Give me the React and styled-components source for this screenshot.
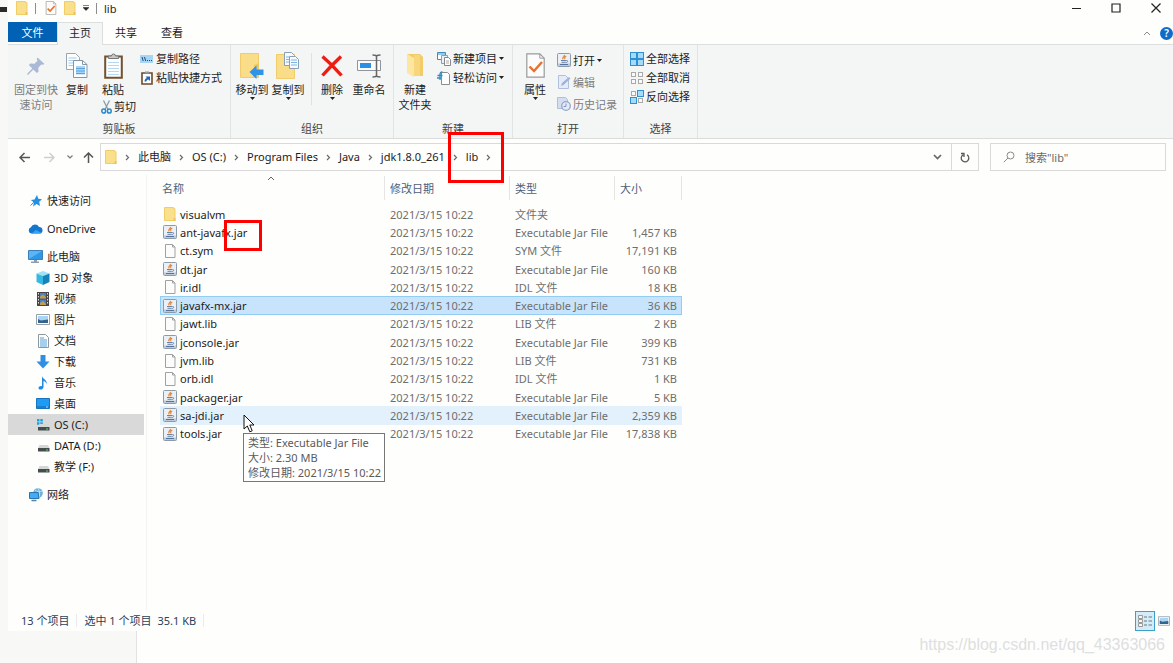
import React from "react";
import styled, { createGlobalStyle, css } from "styled-components";

const Global = createGlobalStyle`
  * { box-sizing: border-box; }
  body {
    margin: 0;
    background: #fefefd;
    color: #1c1c1c;
    font: 11px/15px "Noto Sans", "Noto Sans CJK SC", sans-serif;
    overflow: hidden;
  }
  button, input {
    font: inherit;
    color: inherit;
    background: none;
    border: 0;
    padding: 0;
    margin: 0;
    border-radius: 0;
  }
  a { color: inherit; text-decoration: none; }
  svg { display: block; flex: none; }
`;

/* ---------- icons ---------- */

const Svg = ({ w, h = w, box, children }) => (
  <svg width={w} height={h} viewBox={box || `0 0 ${w} ${h}`} fill="none" aria-hidden="true">
    {children}
  </svg>
);

const Folder = ({ w = 12, h = 14 }) => (
  <Svg w={w} h={h} box="0 0 12 14">
    <path d="M.5.5h9v1.200h1.500v11.800H.5z" fill="#fbe08c" stroke="#f1cd69" />
    <path d="M9.500 11h2v3h-2z" fill="#eec45c" />
  </Svg>
);

const CheckDoc = ({ w = 12, h = 14, fold }) => (
  <Svg w={w} h={h} box="0 0 19 25">
    <path d="M.8.8h13l4.400 4.400v19H.8z" fill="#fcfcfc" stroke="#9a9a9a" strokeWidth="1.200" />
    <path d="M13.800.8v4.400h4.400" stroke="#9a9a9a" />
    <path d="M3.500 13.500l4.500 4.500 8-9" stroke="#e8722c" strokeWidth={fold ? 2.4 : 3} />
  </Svg>
);

const Caret = () => (
  <Svg w={5} h={3}>
    <path d="M0 0h5L2.500 3z" fill="#222" />
  </Svg>
);

const Chevron = () => (
  <Svg w={5} h={7}>
    <path d="M1 1l2.500 2.500L1 6" stroke="#6a6a6a" strokeWidth="1.200" />
  </Svg>
);

const Down = () => (
  <Svg w={9} h={6}>
    <path d="M1 1l3.500 3.500L8 1" stroke="#666" strokeWidth="1.700" />
  </Svg>
);

const Up = ({ color = "#8a8a8a" }) => (
  <Svg w={8} h={5}>
    <path d="M1 4l3-3 3 3" stroke={color} />
  </Svg>
);

const Pin = () => (
  <Svg w={20} h={20}>
    <path d="M11.500 1.500l7 6.500-2 .8-1.200-.3-3 3.300.2 4-1.700 1.200-3.500-3.400L2 19l-1-1 5.300-5.600L2.800 9 4.500 7.600l4 .1 3-3-.8-1.500z" fill="#a9b9d6" />
  </Svg>
);

const Copy = () => (
  <Svg w={22} h={25}>
    <path d="M.5.5h9l4 4v12H.5z" fill="#fbfdff" stroke="#9aa5b0" />
    <path d="M2.500 5h8M2.500 7.500h8M2.500 10h8M2.500 12.500h8" stroke="#a8cbe8" />
    <path d="M7.500 7.500h9l4.500 4v13H7.500z" fill="#fbfdff" stroke="#8795a3" />
    <path d="M10 13h9v8.500h-9z" fill="#a7d4f5" />
    <path d="M10 15.500h9M10 18h9M10 20.500h9" stroke="#5ba3dc" />
    <path d="M16.500 7.500v4H21" stroke="#8795a3" />
  </Svg>
);

const Clipboard = () => (
  <Svg w={19} h={26}>
    <path d="M1.200 3.500h16.600v21.300H1.200z" fill="#fdfeff" stroke="#73512f" strokeWidth="2" />
    <path d="M4.500 5.500V3h3a2 2 0 014 0h3v2.500z" fill="#c4c8cb" stroke="#777" />
    <path d="M4 9.500h11M4 12.500h11M4 15.500h11M4 18.500h11M4 21.500h11" stroke="#b8d7f0" />
  </Svg>
);

const Scissors = () => (
  <Svg w={11} h={14}>
    <path d="M2.500.5l4.500 9M8.500.5l-4.500 9" stroke="#8a99a6" strokeWidth="1.300" />
    <ellipse cx="2.700" cy="11" rx="1.900" ry="2.100" stroke="#2589cc" strokeWidth="1.500" />
    <ellipse cx="8.300" cy="11" rx="1.900" ry="2.100" stroke="#2589cc" strokeWidth="1.500" />
  </Svg>
);

const PathIcon = () => (
  <Svg w={14} h={8}>
    <path d="M0 0h13v8H0z" fill="#a6d5f5" />
    <path d="M2 2l1.200 4M4.500 2l1.200 4M7 5.500h1M9 5.500h1M11 5.500h1" stroke="#274b72" />
  </Svg>
);

const PasteShortcut = () => (
  <Svg w={14} h={14} box="-1 0 14 14">
    <path d="M1 2h10v11H1z" fill="#fff" stroke="#6b4b2c" strokeWidth="1.600" />
    <path d="M4 .5h4v2H4z" fill="#999" />
    <path d="M3.500 10.500c0-2 1-3 2.500-3.500L4.500 5.500H9V10L7.500 8.500c-1.500.2-2 1-2 2z" fill="#1f66b8" />
  </Svg>
);

const MoveTo = () => (
  <Svg w={24} h={26}>
    <path d="M.5.5h18v24H.5z" fill="#f9dd88" stroke="#f0cc6c" />
    <path d="M14 12l-1 12h6V10z" fill="#eec764" />
    <path d="M9.500 19l7-6.500v4h7v5.500h-7v4z" fill="#2f93e8" />
  </Svg>
);

const CopyTo = () => (
  <Svg w={24} h={27}>
    <path d="M.5 2.500h18v24H.5z" fill="#f9dd88" stroke="#f0cc6c" />
    <path d="M8.500.5h7l3 3v10h-10z" fill="#f7fbff" stroke="#8aa0b3" />
    <path d="M13.500 4.500h6l3 3v9h-9z" fill="#f7fbff" stroke="#8aa0b3" />
    <path d="M15 8h6M15 10.500h6M15 13h6M10 5h3M10 7.500h3M10 10h3" stroke="#78b4e6" />
  </Svg>
);

const Cross = () => (
  <Svg w={22} h={22}>
    <path d="M1.500 1.500C8 7 14 13 20.500 20.500M20 1.500C13 8 8 13 1.500 20.500" stroke="#ee1c12" strokeWidth="3.400" />
  </Svg>
);

const Rename = () => (
  <Svg w={25} h={24}>
    <path d="M.5 6.500h23v10H.5z" fill="#fbfbfb" stroke="#8f959b" />
    <path d="M3 9h11v5H3z" fill="#2d8fe3" />
    <path d="M15.500 1c2.500 0 4 .5 4 1.500 0-1 1.500-1.500 4-1.500M19.500 2v19.500M15.500 23c2.500 0 4-.5 4-1.500 0 1 1.500 1.500 4 1.500" stroke="#666" strokeWidth="1.500" />
  </Svg>
);

const NewFolder = () => (
  <Svg w={18} h={25}>
    <path d="M1 1h13l3 3v19H6z" fill="#f3cb68" />
    <path d="M1 1l7 4v19l-7-4z" fill="#fde6a0" />
    <path d="M8 5V2h6v21H8z" fill="#f8d77c" />
  </Svg>
);

const NewItem = () => (
  <Svg w={14} h={14}>
    <path d="M.5.5h8v7h-8z" fill="#fff" stroke="#3c8dbf" />
    <path d="M1 2h7" stroke="#3c8dbf" />
    <path d="M4.500 3.500h6v8h-6z" fill="#e6f3fb" stroke="#7ba5bf" />
    <path d="M7.500 5.500h4l2 2v6h-6z" fill="#fff" stroke="#888" />
    <path d="M9 9h3M9 11h3" stroke="#aaa" />
  </Svg>
);

const EasyAccess = () => (
  <Svg w={14} h={14}>
    <path d="M4.500 1.500h6l2 2v10h-8z" fill="#fff" stroke="#8c8c8c" />
    <path d="M5.500.8C3 .8 3 2 3 3.500V9M.5 4.500h5M0 7h4" stroke="#2e8bc0" strokeWidth="1.300" />
  </Svg>
);

const Jar = () => (
  <Svg w={14} h={14}>
    <rect x=".5" y=".5" width="13" height="13" rx="1" fill="#eaf0f6" stroke="#8d9aaa" />
    <path d="M1 10.500h12V13H1z" fill="#bccada" />
    <path d="M7.300 2c1 1.500-2.800 2.200-1.200 4.300M9.200 3.200c-2 1-1.800 1.500-1.300 3" stroke="#e58a3c" strokeWidth="1.300" />
    <path d="M4 7.500h5.300M4.500 9.300h4.300M9.500 7.500c1.800-.2 1.600 1.800-.4 2" stroke="#6682a5" />
    <path d="M3 11.500h8" stroke="#55739a" />
  </Svg>
);

const Edit = () => (
  <Svg w={14} h={14}>
    <path d="M1.500.5h7l3 3v10h-10z" fill="#e5ecf8" stroke="#b0bfdc" />
    <path d="M4 11l1-3 7-6 1.500 1.500-7 6.500z" fill="#9fb2d8" />
  </Svg>
);

const History = () => (
  <Svg w={14} h={14}>
    <path d="M.5.500h8l2 2v9H.5z" fill="#d4def0" stroke="#b0bfdc" />
    <circle cx="9" cy="9" r="4.300" fill="#e5ebf6" stroke="#93a6cb" strokeWidth="1.300" />
    <path d="M9 6.500V9.500H6.500" stroke="#8296bf" />
  </Svg>
);

const Select = ({ on }) => (
  <Svg w={14} h={14}>
    {[[0, 0], [7, 0], [0, 7], [7, 7]].map(([x, y], i) => (
      <rect
        key={i}
        x={x + (on[i] ? 0.5 : 1.5)}
        y={y + (on[i] ? 0.5 : 1.5)}
        width={on[i] ? 6 : 4}
        height={on[i] ? 6 : 4}
        fill={on[i] ? "#a4dbfb" : "#fafafa"}
        stroke={on[i] ? "#2f8fd0" : "#a9a9a9"}
      />
    ))}
  </Svg>
);

const Star = () => (
  <Svg w={12} h={12}>
    <path d="M7 0l1.300 3.800L12 4.200 9.200 6.800l.8 4.200-3.500-2L3 11.500l1-4L.8 5l3.700-.6z" fill="#2490e3" />
    <path d="M4.200 7L.5 10.500" stroke="#2490e3" />
  </Svg>
);

const Cloud = () => (
  <Svg w={15} h={10}>
    <path d="M3.500 9.500a3.200 3.200 0 01-.6-6.200A4.500 4.500 0 0111 3a3.300 3.300 0 011 6.500z" fill="#1477cf" />
    <path d="M3.500 9.500L8 6l5.500 3c-.5.500-1 .5-1.500.5z" fill="#35a5ee" />
  </Svg>
);

const Pc = () => (
  <Svg w={15} h={13}>
    <path d="M.5.5h14v9H.5z" fill="#5ab5f4" stroke="#3a7fb8" />
    <path d="M1 9L14 1v8z" fill="#2f97e4" />
    <path d="M6 10h3v1.500h2V13H3v-1.500h3z" fill="#8ba0b0" />
  </Svg>
);

const Cube = () => (
  <Svg w={14} h={14}>
    <path d="M7 0l6.500 2.500L7 5 .5 2.500z" fill="#9fe3f6" />
    <path d="M.5 2.500L7 5v9L.5 11z" fill="#36b8e0" />
    <path d="M13.500 2.500L7 5v9l6.500-3z" fill="#1583b8" />
  </Svg>
);

const Film = () => (
  <Svg w={12} h={14}>
    <path d="M0 0h12v14H0z" fill="#474747" />
    <path d="M3 1h6v5.500H3zM3 7.500h6V13H3z" fill="#4b7fc8" />
    <path d="M3 4.500l3-2 3 3v1H3zM3 11l3-2 3 3v1H3z" fill="#c69b4a" />
    <path d="M1.500 1v12M10.500 1v12" stroke="#ddd" strokeDasharray="1.500 1.500" />
  </Svg>
);

const Picture = ({ w = 14, h = 11 }) => (
  <Svg w={w} h={h} box="0 0 14 11">
    <path d="M.5.5h13v10H.5z" fill="#fff" stroke="#9a9fa5" />
    <path d="M2 2h10v7H2z" fill="#a8d4f5" />
    <path d="M2 5l3 1.500L12 5.500V9H2z" fill="#34648c" />
  </Svg>
);

const TextDoc = () => (
  <Svg w={11} h={14}>
    <path d="M.5.5h7l3 3v10H.5z" fill="#fff" stroke="#8f979e" />
    <path d="M2 4h4M2 6h7M2 8h7M2 10h7M2 12h7" stroke="#4f9fdb" />
  </Svg>
);

const Download = () => (
  <Svg w={14} h={14}>
    <path d="M4.500 0h5v6.500h4L7 13.500.5 6.500h4z" fill="#2f8fe5" />
  </Svg>
);

const Music = () => (
  <Svg w={12} h={14}>
    <path d="M5 0c.5 3 5.500 3.500 4.500 8-.5-2-2-3-3-3v6c0 3-5 3.500-5 1 0-1.500 2-2.300 3.500-1.800z" fill="#1e8ce4" />
  </Svg>
);

const DesktopIcon = () => (
  <Svg w={14} h={11}>
    <path d="M.5.5h13v10H.5z" fill="#1d9bf5" stroke="#1673be" />
    <path d="M1 9h12" stroke="#1565a8" />
    <path d="M10 9h2" stroke="#a9dbff" />
  </Svg>
);

const Drive = ({ win }) => (
  <Svg w={13} h={12}>
    {win && <path d="M0 0h2.500v2.500H0zM3.300 0h2.500v2.500H3.300zM0 3.300h2.500v2.500H0zM3.300 3.300h2.500v2.500H3.300z" fill="#18a3e6" />}
    <path d="M2.500 5h8.500l1.500 3H1z" fill="#d4d6d8" />
    <path d="M1 8h11.500v3.500H1z" fill="#484b4e" />
    <path d="M9 10h2" stroke="#4be05b" />
  </Svg>
);

const Network = () => (
  <Svg w={14} h={14}>
    <circle cx="9" cy="5" r="4.800" fill="#6db0d8" />
    <path d="M6 2c2 2 5 2 7 1M9 .3c2 3 2 6 1 9" stroke="#c2e3f5" />
    <path d="M.5 4.500h8.500l1 6h-9.500z" fill="#45aaf0" stroke="#2674b4" />
    <path d="M2.500 12.500h5" stroke="#5c7f99" strokeWidth="1.500" />
  </Svg>
);

const Page = () => (
  <Svg w={12} h={14}>
    <path d="M1.500.5h7l2.500 2.500v10.500H1.500z" fill="#fcfcfc" stroke="#a0a0a0" />
    <path d="M8.500.5V3H11" stroke="#a0a0a0" />
  </Svg>
);

const ArrowIcon = ({ color = "#555", turn = 0 }) => (
  <Svg w={11} h={11}>
    <path d="M11 5.500H1M5.500 1L1 5.500 5.500 10" stroke={color} strokeWidth="1.500" transform={`rotate(${turn} 5.500 5.500)`} />
  </Svg>
);

const Refresh = () => (
  <Svg w={10} h={11}>
    <path d="M7 2.800a3.800 3.800 0 11-3.800-.1M1 1.500h3V5" stroke="#5a5a5a" strokeWidth="1.300" />
  </Svg>
);

const Lens = () => (
  <Svg w={12} h={12}>
    <circle cx="7.500" cy="4.500" r="3.500" stroke="#8a8a8a" />
    <path d="M5 7L.8 11.200" stroke="#8a8a8a" />
  </Svg>
);

const CursorIcon = () => (
  <Svg w={12} h={19}>
    <path d="M1 1v14l3.300-3 2.500 5.800 2.400-1L6.800 11H11z" fill="#fff" stroke="#111" />
  </Svg>
);

const DetailsIcon = () => (
  <Svg w={14} h={12}>
    <path d="M.5.5h4v3h-4zM.5 4.500h4v3h-4zM.5 8.500h4v3h-4z" fill="#fbf6ee" stroke="#9a9a9a" />
    <path d="M6 2h3M10.500 2H14M6 6h3M10.500 6H14M6 10h3M10.500 10H14" stroke="#6a7680" />
  </Svg>
);

/* ---------- frame ---------- */

const Screen = styled.div`
  min-height: 100vh;
  display: flex;
  flex-direction: column;
  background: #f8f8f7;
`;

const Window = styled.div`
  flex: 1;
  margin-left: 8px;
  display: flex;
  flex-direction: column;
  background: #fefefd;
`;

const TitleBar = styled.header`
  position: relative;
  height: 22px;
  padding: 0 12px 6px 8px;
  display: flex;
  align-items: center;
  justify-content: space-between;

  &::before {
    content: "";
    position: absolute;
    left: -8px;
    top: 7px;
    width: 7px;
    height: 5px;
    background: #2b2b2b;
  }
`;

const QuickTools = styled.div`
  display: flex;
  align-items: center;
  gap: 7px;
`;

const Rule = styled.span`
  width: 1px;
  height: 11px;
  background: #8d8d8d;
`;

const Spaced = styled(Rule)`
  margin-right: 2px;
`;

const WindowButtons = styled.div`
  display: flex;
  gap: 30px;
  button { width: 10px; height: 10px; }
`;

const TabBar = styled.nav`
  height: 23px;
  display: flex;
  border-bottom: 1px solid #dcdddd;
`;

const Tab = styled.button`
  width: 46px;
  height: 23px;
  padding-bottom: 3px;
  ${(p) => p.$kind === "file" && css`
    width: 49px;
    height: 20px;
    padding: 0;
    color: #fff;
    background: #0061b5;
  `}
  ${(p) => p.$kind === "active" && css`
    background: #f4f5f5;
    border: 1px solid #dcdddd;
    border-bottom: 0;
  `}
`;

const TabEnd = styled.div`
  margin-left: auto;
  display: flex;
  align-items: center;
  gap: 9px;
`;

const Help = styled.button`
  width: 13px;
  height: 13px;
  border-radius: 50%;
  background: #0f6cc9;
  color: #fff;
  font-size: 10px;
  line-height: 13px;
  font-weight: 600;
`;

/* ---------- ribbon ---------- */

const Ribbon = styled.div`
  height: 94px;
  display: flex;
  background: #f4f5f5;
  border-bottom: 1px solid #dadcdc;
`;

const Group = styled.section`
  display: flex;
  flex-direction: column;
  justify-content: space-between;
  width: ${(p) => p.$w}px;
  padding: 4px 0 2px ${(p) => p.$pad || 0}px;
  border-right: 1px solid #e2e3e3;
`;

const GroupTools = styled.div`
  display: flex;
  align-items: flex-start;
`;

const GroupName = styled.h2`
  margin: 0 0 0 -${(p) => p.$pad || 0}px;
  font-size: 11px;
  font-weight: 400;
  text-align: center;
  color: #444;
`;

const Big = styled.button`
  width: ${(p) => p.$w || 36}px;
  display: flex;
  flex-direction: column;
  align-items: center;
  white-space: nowrap;
  color: ${(p) => (p.$dim ? "#7c7c7c" : "inherit")};
`;

const BigIcon = styled.span`
  height: 33px;
  display: flex;
  align-items: center;
`;

const Stack = styled.div`
  display: flex;
  flex-direction: column;
  align-items: flex-start;
  padding-left: ${(p) => p.$pad || 4}px;
`;

const Small = styled.button`
  height: ${(p) => p.$h || 19}px;
  display: flex;
  align-items: center;
  gap: 2px;
  white-space: nowrap;
  color: ${(p) => (p.$dim ? "#7c7c7c" : "inherit")};
`;

const Divider = styled.span`
  width: 1px;
  height: 52px;
  margin: 4px 2px 0 5px;
  background: #e0e1e1;
`;

/* ---------- address ---------- */

const AddressRow = styled.div`
  display: flex;
  align-items: center;
  padding: 4px 7px 4px 11px;
`;

const NavButtons = styled.div`
  width: 81px;
  display: flex;
  align-items: center;
  gap: 14px;
  button:nth-child(3) { margin-left: -2px; }
  button:nth-child(4) { margin-left: -4px; }
`;

const AddressBox = styled.div`
  flex: 1;
  height: 28px;
  display: flex;
  align-items: center;
  border: 1px solid #d9d9d9;
  padding-left: 4px;
`;

const Crumbs = styled.nav`
  flex: 1;
  display: flex;
  align-items: center;
`;

const Sep = styled.span`
  width: 21px;
  display: flex;
  justify-content: center;
`;

const Crumb = styled.button`
  position: relative;
  padding-bottom: 2px;
`;

const BoxButton = styled.button`
  width: 27px;
  height: 26px;
  display: flex;
  align-items: center;
  justify-content: center;
  border-left: ${(p) => (p.$line ? "1px solid #d9d9d9" : 0)};
`;

const Search = styled.label`
  width: 176px;
  height: 28px;
  margin-left: 11px;
  padding-left: 12px;
  display: flex;
  align-items: center;
  gap: 10px;
  border: 1px solid #d9d9d9;
  input { width: 120px; outline: 0; }
  input::placeholder { color: #6a6a6a; opacity: 1; }
`;

const RedBox = styled.span`
  position: absolute;
  z-index: 2;
  border: 3px solid #fe0000;
  pointer-events: none;
`;

const CrumbMark = styled(RedBox)`
  left: -18px;
  top: -17px;
  width: 56px;
  height: 51px;
`;

const NameMark = styled(RedBox)`
  left: 61px;
  top: -5px;
  width: 38px;
  height: 31px;
`;

/* ---------- body ---------- */

const Body = styled.div`
  flex: 1;
  display: flex;
`;

const Sidebar = styled.nav`
  width: 139px;
  padding: 15px 2px 0 0;
  border-right: 1px solid #f3f3f3;
`;

const Place = styled.a`
  height: 21px;
  display: flex;
  align-items: center;
  padding-left: ${(p) => (p.$nested ? 28 : 20)}px;
  margin-bottom: ${(p) => (p.$gap ? 7 : 0)}px;
  background: ${(p) => (p.$on ? "#d9d9d9" : "none")};
`;

const PlaceIcon = styled.span`
  width: ${(p) => (p.$nested ? 18 : 19)}px;
  padding-right: 4px;
  display: flex;
  justify-content: center;
`;

const Files = styled.main`
  flex: 1;
  padding: 1px 0 0 13px;
`;

const Table = styled.table`
  width: 522px;
  height: 267px;
  table-layout: fixed;
  border-collapse: separate;
  border-spacing: 0;
  td, th { padding: 0 5px; text-align: left; white-space: nowrap; font-weight: 400; }
`;

const Th = styled.th`
  position: relative;
  height: 24px;
  width: ${(p) => p.$w}px;
  color: #4c607a;
  border-right: 1px solid #e5e5e5;
  && { padding-left: ${(p) => p.$pad || 5}px; }
`;

const SortMark = styled.span`
  position: absolute;
  left: 107px;
  top: 0;
`;

const Spacer = styled.tr`
  height: 5px;
`;

const Row = styled.tr`
  background: ${(p) => (p.$state === "selected" ? "#c8e4fc" : p.$state === "hover" ? "#e3f1fd" : "none")};
  outline: ${(p) => (p.$state === "selected" ? "1px solid #93cdf3" : "none")};
  outline-offset: -1px;
  td { color: #6e6e6e; }
  td:first-child { color: #1c1c1c; padding: 0 0 0 3px; }
  td:last-child { text-align: right; }
`;

const Name = styled.div`
  position: relative;
  display: flex;
  align-items: center;
  gap: 3px;
`;

const NameIcon = styled.span`
  width: 14px;
  display: flex;
  justify-content: center;
`;

const Pointer = styled.span`
  position: absolute;
  left: 80px;
  top: 6px;
  z-index: 4;
`;

const Tip = styled.div`
  position: absolute;
  left: 80px;
  top: 25px;
  z-index: 3;
  width: 142px;
  padding: 1px 4px;
  background: #fff;
  border: 1px solid #777;
  color: #5a5a5a;
`;

const StatusBar = styled.footer`
  height: 21px;
  display: flex;
  align-items: center;
  padding: 0 3px 0 13px;
  color: #27425f;
`;

const StatusText = styled.span`
  padding-right: ${(p) => p.$end || 0}px;
  margin-right: ${(p) => p.$gap || 0}px;
  border-right: ${(p) => (p.$end ? "1px solid #ebebeb" : 0)};
  line-height: 13px;
`;

const Views = styled.div`
  margin-left: auto;
  display: flex;
  align-items: center;
  gap: 3px;
`;

const View = styled.button`
  display: flex;
  align-items: center;
  justify-content: center;
  ${(p) => p.$on && css`
    width: 20px;
    height: 20px;
    background: #d3ecf8;
    border: 1px solid #3ca0c9;
  `}
`;

const Below = styled.div`
  height: 32px;
  display: flex;
`;

const BelowMain = styled.div`
  flex: 1;
  margin-left: 136px;
  padding: 4px 8px 0 0;
  border-left: 1px solid #e2e2e2;
  background: #fefefd;
  text-align: right;
  font: 16px/20px "Liberation Sans", sans-serif;
  color: #dfdfdf;
`;

/* ---------- data ---------- */

const places = [
  ["快速访问", <Star />, { gap: true }],
  ["OneDrive", <Cloud />, { gap: true }],
  ["此电脑", <Pc />, {}],
  ["3D 对象", <Cube />, { nested: true }],
  ["视频", <Film />, { nested: true }],
  ["图片", <Picture />, { nested: true }],
  ["文档", <TextDoc />, { nested: true }],
  ["下载", <Download />, { nested: true }],
  ["音乐", <Music />, { nested: true }],
  ["桌面", <DesktopIcon />, { nested: true }],
  ["OS (C:)", <Drive win />, { nested: true, on: true }],
  ["DATA (D:)", <Drive />, { nested: true }],
  ["教学 (F:)", <Drive />, { nested: true, gap: true }],
  ["网络", <Network />, {}],
];

const JAR = "Executable Jar File";
const files = [
  ["visualvm", "文件夹", ""],
  ["ant-javafx.jar", JAR, "1,457 KB"],
  ["ct.sym", "SYM 文件", "17,191 KB"],
  ["dt.jar", JAR, "160 KB"],
  ["ir.idl", "IDL 文件", "18 KB"],
  ["javafx-mx.jar", JAR, "36 KB", "selected"],
  ["jawt.lib", "LIB 文件", "2 KB"],
  ["jconsole.jar", JAR, "399 KB"],
  ["jvm.lib", "LIB 文件", "731 KB"],
  ["orb.idl", "IDL 文件", "1 KB"],
  ["packager.jar", JAR, "5 KB"],
  ["sa-jdi.jar", JAR, "2,359 KB", "hover"],
  ["tools.jar", JAR, "17,838 KB"],
];

const path = ["此电脑", "OS (C:)", "Program Files", "Java", "jdk1.8.0_261", "lib"];

const BigButton = ({ icon, lines, caret, ...rest }) => (
  <Big {...rest}>
    <BigIcon>{icon}</BigIcon>
    {lines.map((line) => <span key={line}>{line}</span>)}
    {caret && <Caret />}
  </Big>
);

const SmallButton = ({ icon, label, caret, ...rest }) => (
  <Small {...rest}>
    {icon}
    <span>{label}</span>
    {caret && <Caret />}
  </Small>
);

export default function App() {
  return (
    <Screen>
      <Global />
      <Window>
        <TitleBar>
          <QuickTools>
            <Folder />
            <Spaced />
            <CheckDoc />
            <Folder />
            <Svg w={6} h={6}><path d="M0 .5h6M0 2.500h6L3 5.500z" stroke="#333" strokeWidth=".6" fill="#222" /></Svg>
            <Rule />
            <span>lib</span>
          </QuickTools>
          <WindowButtons>
            <button aria-label="最小化"><Svg w={10}><path d="M1 5.500h9" stroke="#222" /></Svg></button>
            <button aria-label="最大化"><Svg w={10}><path d="M1 1h8v8H1z" stroke="#222" strokeWidth="1.200" /></Svg></button>
            <button aria-label="关闭"><Svg w={10}><path d="M.5.5l9 9M9.500.5l-9 9" stroke="#222" strokeWidth="1.200" /></Svg></button>
          </WindowButtons>
        </TitleBar>
        <TabBar>
          <Tab $kind="file">文件</Tab>
          <Tab $kind="active">主页</Tab>
          <Tab>共享</Tab>
          <Tab>查看</Tab>
          <TabEnd>
            <button aria-label="折叠功能区"><Up /></button>
            <Help>?</Help>
          </TabEnd>
        </TabBar>

        <Ribbon>
          <Group $w={223}>
            <GroupTools>
              <BigButton $w={56} $dim icon={<Pin />} lines={["固定到快", "速访问"]} />
              <BigButton $w={26} icon={<Copy />} lines={["复制"]} />
              <div>
                <BigButton $w={46} icon={<Clipboard />} lines={["粘贴"]} />
                <Stack $pad={11}><SmallButton icon={<Scissors />} label="剪切" /></Stack>
              </div>
              <Stack>
                <SmallButton icon={<PathIcon />} label="复制路径" />
                <SmallButton icon={<PasteShortcut />} label="粘贴快捷方式" />
              </Stack>
            </GroupTools>
            <GroupName>剪贴板</GroupName>
          </Group>
          <Group $w={163} $pad={3}>
            <GroupTools>
              <BigButton icon={<MoveTo />} lines={["移动到"]} caret />
              <BigButton icon={<CopyTo />} lines={["复制到"]} caret />
              <Divider />
              <BigButton icon={<Cross />} lines={["删除"]} caret />
              <BigButton $w={38} icon={<Rename />} lines={["重命名"]} />
            </GroupTools>
            <GroupName $pad={3}>组织</GroupName>
          </Group>
          <Group $w={119} $pad={3}>
            <GroupTools>
              <BigButton icon={<NewFolder />} lines={["新建", "文件夹"]} />
              <Stack>
                <SmallButton icon={<NewItem />} label="新建项目" caret />
                <SmallButton icon={<EasyAccess />} label="轻松访问" caret />
              </Stack>
            </GroupTools>
            <GroupName $pad={3}>新建</GroupName>
          </Group>
          <Group $w={111} $pad={4}>
            <GroupTools>
              <BigButton icon={<CheckDoc w={19} h={25} fold />} lines={["属性"]} caret />
              <Stack>
                <SmallButton $h={22} icon={<Jar />} label="打开" caret />
                <SmallButton $h={22} $dim icon={<Edit />} label="编辑" />
                <SmallButton $h={22} $dim icon={<History />} label="历史记录" />
              </Stack>
            </GroupTools>
            <GroupName $pad={4}>打开</GroupName>
          </Group>
          <Group $w={74} $pad={2}>
            <Stack>
              <SmallButton icon={<Select on={[1, 1, 1, 1]} />} label="全部选择" />
              <SmallButton icon={<Select on={[0, 0, 0, 0]} />} label="全部取消" />
              <SmallButton icon={<Select on={[0, 1, 1, 0]} />} label="反向选择" />
            </Stack>
            <GroupName $pad={2}>选择</GroupName>
          </Group>
        </Ribbon>

        <AddressRow>
          <NavButtons>
            <button aria-label="后退"><ArrowIcon /></button>
            <button aria-label="前进"><ArrowIcon color="#cfcfcf" turn={180} /></button>
            <button aria-label="最近"><Svg w={6} h={4}><path d="M.5.5L3 3 5.500.5" stroke="#777" strokeWidth="1.200" /></Svg></button>
            <button aria-label="上移"><ArrowIcon turn={90} /></button>
          </NavButtons>
          <AddressBox>
            <Folder />
            <Crumbs>
              <Sep><Chevron /></Sep>
              {path.map((part, i) => (
                <React.Fragment key={part}>
                  <Crumb>
                    {part}
                    {i === path.length - 1 && <CrumbMark />}
                  </Crumb>
                  <Sep><Chevron /></Sep>
                </React.Fragment>
              ))}
            </Crumbs>
            <BoxButton aria-label="历史"><Down /></BoxButton>
            <BoxButton $line aria-label="刷新"><Refresh /></BoxButton>
          </AddressBox>
          <Search>
            <Lens />
            <input aria-label="搜索" placeholder={'搜索"lib"'} />
          </Search>
        </AddressRow>

        <Body>
          <Sidebar>
            {places.map(([label, icon, o]) => (
              <Place href="#" key={label} $nested={o.nested} $gap={o.gap} $on={o.on}>
                <PlaceIcon $nested={o.nested}>{icon}</PlaceIcon>
                {label}
              </Place>
            ))}
          </Sidebar>
          <Files>
            <Table>
              <thead>
                <tr>
                  <Th $w={225} $pad={2}>名称<SortMark><Up color="#666" /></SortMark></Th>
                  <Th $w={125}>修改日期</Th>
                  <Th $w={105}>类型</Th>
                  <Th $w={67}>大小</Th>
                </tr>
                <Spacer aria-hidden="true" />
              </thead>
              <tbody>
                {files.map(([name, type, size, state]) => (
                  <Row key={name} $state={state}>
                    <td>
                      <Name>
                        <NameIcon>
                          {type === "文件夹" ? <Folder /> : type === JAR ? <Jar /> : <Page />}
                        </NameIcon>
                        {name}
                        {name === "ant-javafx.jar" && <NameMark />}
                        {state === "hover" && (
                          <>
                            <Pointer><CursorIcon /></Pointer>
                            <Tip role="tooltip">
                              <div>类型: {JAR}</div>
                              <div>大小: 2.30 MB</div>
                              <div>修改日期: 2021/3/15 10:22</div>
                            </Tip>
                          </>
                        )}
                      </Name>
                    </td>
                    <td>2021/3/15 10:22</td>
                    <td>{type}</td>
                    <td>{size}</td>
                  </Row>
                ))}
              </tbody>
            </Table>
          </Files>
        </Body>

        <StatusBar>
          <StatusText $end={7} $gap={7}>13 个项目</StatusText>
          <StatusText $gap={6}>选中 1 个项目</StatusText>
          <StatusText $end={7}>35.1 KB</StatusText>
          <Views>
            <View $on aria-label="详细信息"><DetailsIcon /></View>
            <View aria-label="大图标"><Picture w={12} h={10} /></View>
          </Views>
        </StatusBar>
      </Window>
      <Below>
        <BelowMain>https://blog.csdn.net/qq_43363066</BelowMain>
      </Below>
    </Screen>
  );
}
